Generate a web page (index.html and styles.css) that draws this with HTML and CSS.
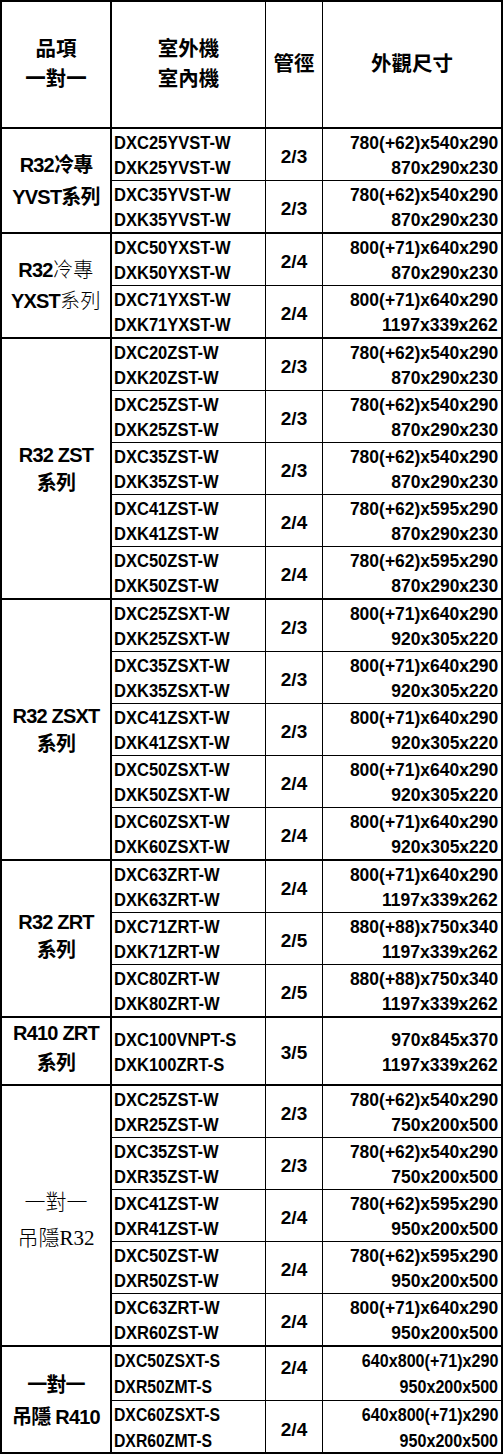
FILE: index.html
```html
<!DOCTYPE html>
<html lang="zh-Hant">
<head>
<meta charset="utf-8">
<title>規格表</title>
<link rel="stylesheet" href="styles.css">
</head>
<body>
<div class="sheet">
  <div class="cell hd c1 hd-lines"><span>品項</span><span>一對一</span></div>
  <div class="cell hd c2 hd-lines"><span>室外機</span><span>室內機</span></div>
  <div class="cell hd c3"><span>管徑</span></div>
  <div class="cell hd c4"><span>外觀尺寸</span></div>

  <!-- Group 1 -->
  <div class="cell c1 grp s2 lh32"><span>R32冷專</span><span>YVST系列</span></div>
  <div class="cell c2 model"><span>DXC25YVST-W</span><span>DXK25YVST-W</span></div>
  <div class="cell c3 pipe">2/3</div>
  <div class="cell c4 dim"><span>780(+62)x540x290</span><span>870x290x230</span></div>
  <div class="cell c2 model end"><span>DXC35YVST-W</span><span>DXK35YVST-W</span></div>
  <div class="cell c3 pipe end">2/3</div>
  <div class="cell c4 dim end"><span>780(+62)x540x290</span><span>870x290x230</span></div>

  <!-- Group 2 -->
  <div class="cell c1 grp s2 lh31"><span>R32<i class="thin">冷專</i></span><span>YXST<i class="thin">系列</i></span></div>
  <div class="cell c2 model"><span>DXC50YXST-W</span><span>DXK50YXST-W</span></div>
  <div class="cell c3 pipe">2/4</div>
  <div class="cell c4 dim"><span>800(+71)x640x290</span><span>870x290x230</span></div>
  <div class="cell c2 model end"><span>DXC71YXST-W</span><span>DXK71YXST-W</span></div>
  <div class="cell c3 pipe end">2/4</div>
  <div class="cell c4 dim end"><span>800(+71)x640x290</span><span>1197x339x262</span></div>

  <!-- Group 3 -->
  <div class="cell c1 grp s5 lh28"><span>R32 ZST</span><span>系列</span></div>
  <div class="cell c2 model"><span>DXC20ZST-W</span><span>DXK20ZST-W</span></div>
  <div class="cell c3 pipe">2/3</div>
  <div class="cell c4 dim"><span>780(+62)x540x290</span><span>870x290x230</span></div>
  <div class="cell c2 model"><span>DXC25ZST-W</span><span>DXK25ZST-W</span></div>
  <div class="cell c3 pipe">2/3</div>
  <div class="cell c4 dim"><span>780(+62)x540x290</span><span>870x290x230</span></div>
  <div class="cell c2 model"><span>DXC35ZST-W</span><span>DXK35ZST-W</span></div>
  <div class="cell c3 pipe">2/3</div>
  <div class="cell c4 dim"><span>780(+62)x540x290</span><span>870x290x230</span></div>
  <div class="cell c2 model"><span>DXC41ZST-W</span><span>DXK41ZST-W</span></div>
  <div class="cell c3 pipe">2/4</div>
  <div class="cell c4 dim"><span>780(+62)x595x290</span><span>870x290x230</span></div>
  <div class="cell c2 model end"><span>DXC50ZST-W</span><span>DXK50ZST-W</span></div>
  <div class="cell c3 pipe end">2/4</div>
  <div class="cell c4 dim end"><span>780(+62)x595x290</span><span>870x290x230</span></div>

  <!-- Group 4 -->
  <div class="cell c1 grp s5 lh28"><span>R32 ZSXT</span><span>系列</span></div>
  <div class="cell c2 model"><span>DXC25ZSXT-W</span><span>DXK25ZSXT-W</span></div>
  <div class="cell c3 pipe">2/3</div>
  <div class="cell c4 dim"><span>800(+71)x640x290</span><span>920x305x220</span></div>
  <div class="cell c2 model"><span>DXC35ZSXT-W</span><span>DXK35ZSXT-W</span></div>
  <div class="cell c3 pipe">2/3</div>
  <div class="cell c4 dim"><span>800(+71)x640x290</span><span>920x305x220</span></div>
  <div class="cell c2 model"><span>DXC41ZSXT-W</span><span>DXK41ZSXT-W</span></div>
  <div class="cell c3 pipe">2/3</div>
  <div class="cell c4 dim"><span>800(+71)x640x290</span><span>920x305x220</span></div>
  <div class="cell c2 model"><span>DXC50ZSXT-W</span><span>DXK50ZSXT-W</span></div>
  <div class="cell c3 pipe">2/4</div>
  <div class="cell c4 dim"><span>800(+71)x640x290</span><span>920x305x220</span></div>
  <div class="cell c2 model end"><span>DXC60ZSXT-W</span><span>DXK60ZSXT-W</span></div>
  <div class="cell c3 pipe end">2/4</div>
  <div class="cell c4 dim end"><span>800(+71)x640x290</span><span>920x305x220</span></div>

  <!-- Group 5 -->
  <div class="cell c1 grp s3 lh28 up"><span>R32 ZRT</span><span>系列</span></div>
  <div class="cell c2 model"><span>DXC63ZRT-W</span><span>DXK63ZRT-W</span></div>
  <div class="cell c3 pipe">2/4</div>
  <div class="cell c4 dim"><span>800(+71)x640x290</span><span>1197x339x262</span></div>
  <div class="cell c2 model"><span>DXC71ZRT-W</span><span>DXK71ZRT-W</span></div>
  <div class="cell c3 pipe">2/5</div>
  <div class="cell c4 dim"><span>880(+88)x750x340</span><span>1197x339x262</span></div>
  <div class="cell c2 model end"><span>DXC80ZRT-W</span><span>DXK80ZRT-W</span></div>
  <div class="cell c3 pipe end">2/5</div>
  <div class="cell c4 dim end"><span>880(+88)x750x340</span><span>1197x339x262</span></div>

  <!-- Group 6 -->
  <div class="cell c1 grp s1 lh30 up"><span>R410 ZRT</span><span>系列</span></div>
  <div class="cell c2 model end"><span>DXC100VNPT-S</span><span>DXK100ZRT-S</span></div>
  <div class="cell c3 pipe end">3/5</div>
  <div class="cell c4 dim end"><span>970x845x370</span><span>1197x339x262</span></div>

  <!-- Group 7 -->
  <div class="cell c1 grp s5 serif"><span>一對一</span><span>吊隱R32</span></div>
  <div class="cell c2 model"><span>DXC25ZST-W</span><span>DXR25ZST-W</span></div>
  <div class="cell c3 pipe">2/3</div>
  <div class="cell c4 dim"><span>780(+62)x540x290</span><span>750x200x500</span></div>
  <div class="cell c2 model"><span>DXC35ZST-W</span><span>DXR35ZST-W</span></div>
  <div class="cell c3 pipe">2/3</div>
  <div class="cell c4 dim"><span>780(+62)x540x290</span><span>750x200x500</span></div>
  <div class="cell c2 model"><span>DXC41ZST-W</span><span>DXR41ZST-W</span></div>
  <div class="cell c3 pipe">2/4</div>
  <div class="cell c4 dim"><span>780(+62)x595x290</span><span>950x200x500</span></div>
  <div class="cell c2 model"><span>DXC50ZST-W</span><span>DXR50ZST-W</span></div>
  <div class="cell c3 pipe">2/4</div>
  <div class="cell c4 dim"><span>780(+62)x595x290</span><span>950x200x500</span></div>
  <div class="cell c2 model end"><span>DXC63ZRT-W</span><span>DXR60ZST-W</span></div>
  <div class="cell c3 pipe end">2/4</div>
  <div class="cell c4 dim end"><span>800(+71)x640x290</span><span>950x200x500</span></div>

  <!-- Group 8 -->
  <div class="cell c1 grp s2 lh32 last"><span>一對一</span><span>吊隱 R410</span></div>
  <div class="cell c2 model sm"><span>DXC50ZSXT-S</span><span>DXR50ZMT-S</span></div>
  <div class="cell c3 pipe hi">2/4</div>
  <div class="cell c4 dim sm"><span>640x800(+71)x290</span><span>950x200x500</span></div>
  <div class="cell c2 model sm last"><span>DXC60ZSXT-S</span><span>DXR60ZMT-S</span></div>
  <div class="cell c3 pipe last">2/4</div>
  <div class="cell c4 dim sm last"><span>640x800(+71)x290</span><span>950x200x500</span></div>
</div>
</body>
</html>
```
FILE: styles.css
```css
* { box-sizing: border-box; }

html, body {
  margin: 0;
  padding: 0;
  background: #fff;
}

.sheet {
  display: grid;
  width: 503px;
  height: 1454px;
  grid-template-columns: 110px 154px 57px 178px;
  grid-template-rows: 127px repeat(25, 1fr);
  border: 2px solid #000;
  font-family: "Liberation Sans", "Noto Sans CJK TC", sans-serif;
  font-weight: 700;
  color: #000;
  background: #fff;
}

.cell {
  display: flex;
  flex-direction: column;
  justify-content: center;
  border-right: 1px solid #000;
  border-bottom: 1px solid #000;
  min-width: 0;
  white-space: nowrap;
}

.c1 { grid-column: 1; border-right-width: 2px; align-items: center; }
.c2 { grid-column: 2; }
.c3 { grid-column: 3; align-items: center; }
.c4 { grid-column: 4; border-right: 0; }

.end { border-bottom-width: 2px; }
.last { border-bottom: 0; }

/* header */
.hd {
  border-bottom-width: 2px;
  align-items: center;
  font-size: 20.5px;
  line-height: 30px;
  padding-bottom: 2px;
}

/* group label column */
.grp {
  font-size: 20px;
  letter-spacing: -0.8px;
  border-bottom-width: 2px;
}
.s1 { grid-row: span 1; }
.s2 { grid-row: span 2; }
.s3 { grid-row: span 3; }
.s5 { grid-row: span 5; }

.lh28 { line-height: 28px; }
.lh30 { line-height: 30px; }
.lh31 { line-height: 31px; }
.lh32 { line-height: 32px; }
.up { padding-bottom: 6px; }

.thin {
  font-style: normal;
  font-weight: 300;
  letter-spacing: 0.5px;
}

.serif {
  font-family: "Liberation Serif", "Noto Sans CJK TC", serif;
  font-weight: 300;
  font-size: 21px;
  line-height: 36px;
  letter-spacing: 0;
  padding-top: 8px;
}

/* model column: condensed bold lines */
.model {
  font-size: 19px;
  line-height: 25px;
  padding-left: 2px;
  padding-top: 1px;
}
.model span {
  display: block;
  transform: scaleX(0.87);
  transform-origin: left center;
}

/* pipe column */
.pipe {
  font-size: 19px;
  line-height: 25px;
  padding-top: 3px;
}
.pipe.hi { padding-top: 0; padding-bottom: 12px; }

/* dimension column */
.dim {
  font-size: 19px;
  line-height: 25px;
  align-items: flex-end;
  padding-right: 3px;
  padding-top: 1px;
}
.dim span {
  display: block;
  transform: scaleX(0.92);
  transform-origin: right center;
}

.sm {
  font-size: 17.5px;
  line-height: 26px;
}
.model.sm span { transform: scaleX(0.9); }
```
